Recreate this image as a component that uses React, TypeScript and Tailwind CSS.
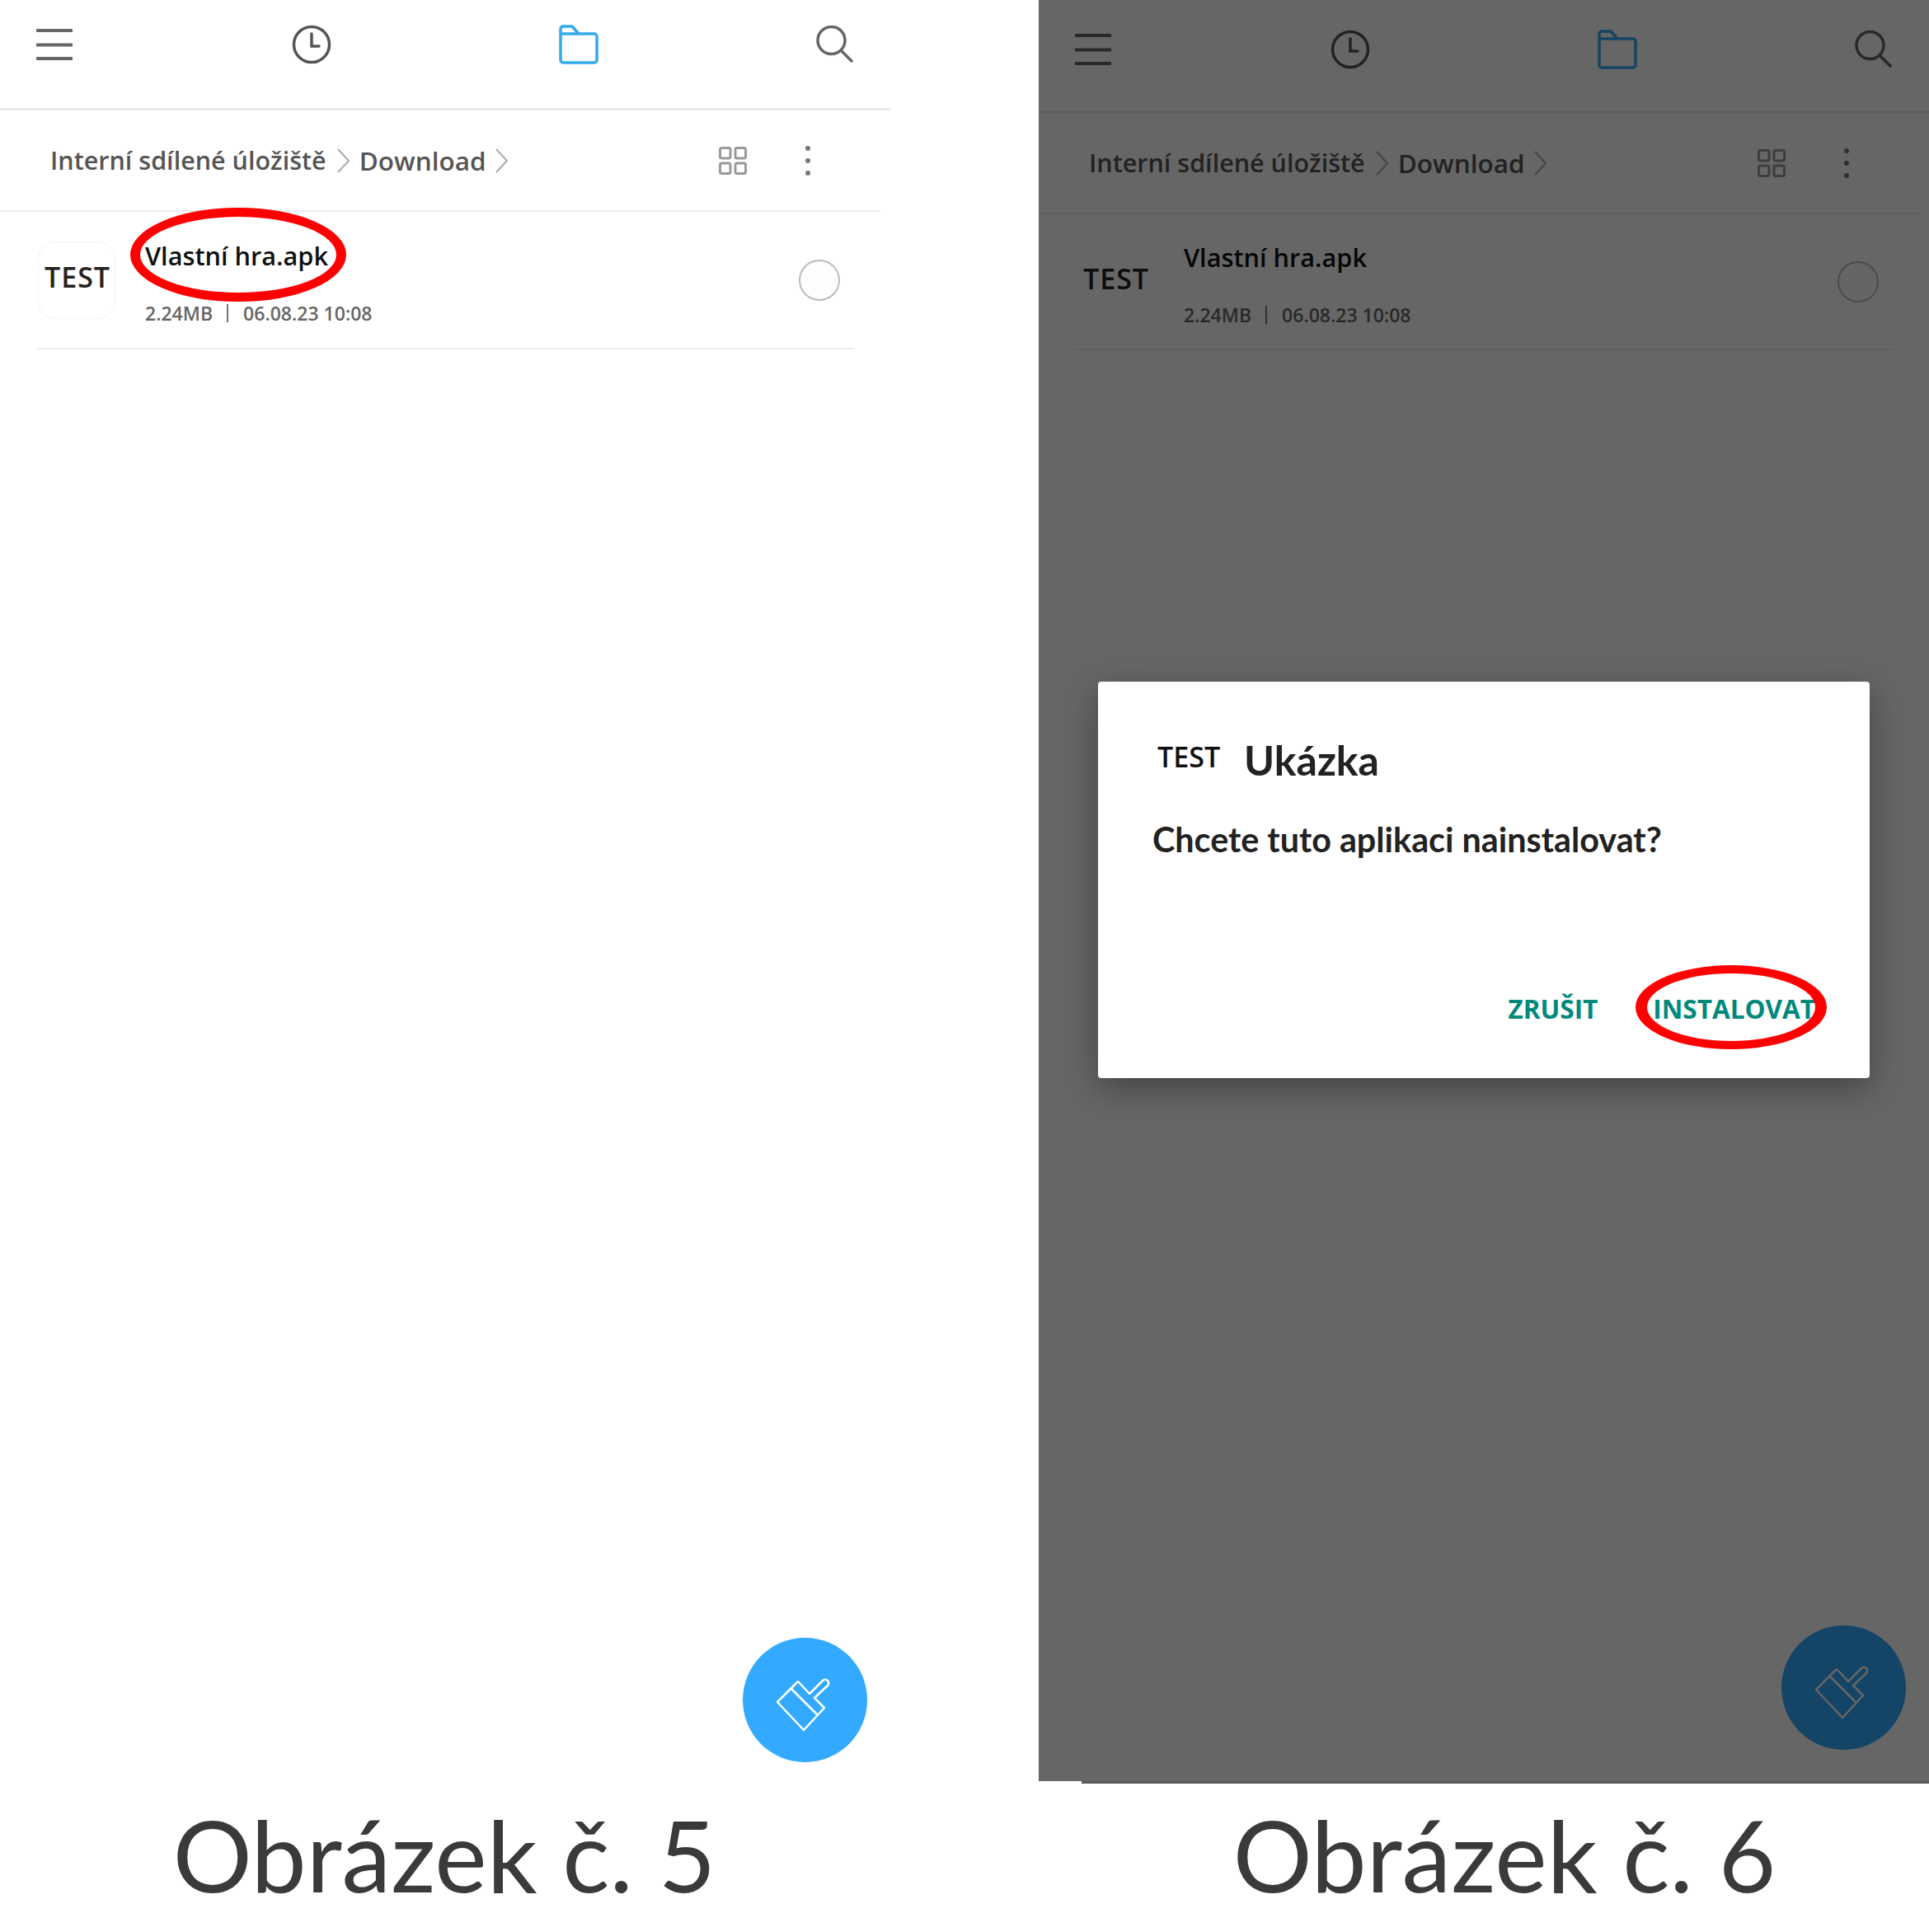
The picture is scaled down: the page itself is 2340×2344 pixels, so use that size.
const ink = "font-['Open_Sans','Noto_Sans',sans-serif]";

function Hamburger() {
  return (
    <svg width="44" height="40" viewBox="0 0 44 40" className="text-[#666]">
      <path d="M1 3h42M1 20.500h42M1 37h42" stroke="currentColor" strokeWidth="4" strokeLinecap="round" />
    </svg>
  );
}

function Clock() {
  return (
    <svg width="48" height="48" viewBox="0 0 48 48" fill="none" stroke="#555" strokeWidth="3.5">
      <circle cx="24" cy="24" r="21.500" />
      <path d="M24 11v15h9" strokeLinecap="round" />
    </svg>
  );
}

function FolderIcon() {
  return (
    <svg width="48" height="48" viewBox="0 0 48 48" fill="none" stroke="#33aaf0" strokeWidth="3.5" strokeLinejoin="round">
      <path d="M2 5a3 3 0 0 1 3-3h11l8 9h19a3 3 0 0 1 3 3v29a3 3 0 0 1-3 3H5a3 3 0 0 1-3-3z" />
      <path d="M2 11h22" />
    </svg>
  );
}

function SearchIcon() {
  return (
    <svg width="46" height="46" viewBox="0 0 46 46" fill="none" stroke="#666" strokeWidth="3.5" strokeLinecap="round">
      <circle cx="18.500" cy="18" r="16.500" />
      <path d="M30 30l13 13" />
    </svg>
  );
}

function Chevron() {
  return (
    <svg width="17" height="30" viewBox="0 0 17 30" fill="none" stroke="#aaa" strokeWidth="2">
      <path d="M2 1l13 14L2 29" />
    </svg>
  );
}

function GridIcon() {
  return (
    <svg width="34" height="34" viewBox="0 0 34 34" fill="none" stroke="#999" strokeWidth="3">
      <rect x="1.500" y="1.500" width="12.500" height="12.500" rx="2" />
      <rect x="20" y="1.500" width="12.500" height="12.500" rx="2" />
      <rect x="1.500" y="20" width="12.500" height="12.500" rx="2" />
      <rect x="20" y="20" width="12.500" height="12.500" rx="2" />
    </svg>
  );
}

function Dots() {
  return (
    <div className="flex h-[36px] w-[6px] flex-col items-center justify-between">
      <span className="size-[6px] rounded-full bg-[#777]" />
      <span className="size-[6px] rounded-full bg-[#777]" />
      <span className="size-[6px] rounded-full bg-[#777]" />
    </div>
  );
}

function Brush() {
  return (
    <svg width="120" height="120" viewBox="0 0 120 120" fill="none" stroke="currentColor" strokeWidth="2.500" strokeLinejoin="round">
      <path d="M26 62L50 38q1-1 2 0l13 14L81 36a4 4 0 0 1 6 6L71 57l12 12-25 27z" />
      <path d="M43 46l31 31" />
    </svg>
  );
}

function Ring({ className }: { className: string }) {
  return <div className={"absolute rounded-[50%] border-[#ff0000] " + className} />;
}

function Screen({ dim }: { dim?: boolean }) {
  return (
    <div className={`relative flex flex-col bg-white ${ink} ${dim ? "h-[2161px]" : "h-[2150px]"}`}>
      <header className={`flex w-[1080px] items-center pl-[44px] ${dim ? "h-[135px] pb-[15px]" : "h-[131px] pb-[23px]"}`}>
        <Hamburger />
        <span className="ml-[266px]"><Clock /></span>
        <span className="ml-[276px]"><FolderIcon /></span>
        <span className="ml-[264px]"><SearchIcon /></span>
      </header>
      <div className={`w-[1080px] bg-[#e9e9e9] ${dim ? "h-[2px]" : "h-[3px]"}`} />
      <div className="flex h-[121px] w-[1070px] items-center pl-[61px]">
        <span className="text-[30.500px] font-semibold text-[#555]">Interní sdílené úložiště</span>
        <span className="ml-[12px]"><Chevron /></span>
        <span className="ml-[11px] text-[31.500px] font-semibold text-[#555]">Download</span>
        <span className="ml-[10px]"><Chevron /></span>
        <span className="ml-auto"><GridIcon /></span>
        <span className="ml-[71px] mr-[87px]"><Dots /></span>
      </div>
      <div className="h-[2px] w-[1068px] bg-[#ececec]" />
      <div className={`flex w-[1036px] items-center pl-[46px] ${dim ? "h-[163px]" : "h-[165px]"}`}>
        <div className="flex h-[94px] w-[94px] items-center justify-center rounded-[22px] border border-[#f2f2f2] pb-[6px] pl-[2px]">
          <span className="text-[34px] font-semibold tracking-[1px] text-[#222]">TEST</span>
        </div>
        <div className="ml-[36px] flex flex-1 flex-col gap-[33px] pt-[4px]">
          <span className="text-[30.700px] leading-[44px] font-semibold text-[#111]">Vlastní hra.apk</span>
          <div className="flex items-center text-[23px] leading-[30px] font-semibold text-[#666]">
            <span>2.24MB</span>
            <span className="ml-[17px] mr-[18px] h-[22px] w-[2px] bg-[#777]" />
            <span>06.08.23 10:08</span>
          </div>
        </div>
        <div className="mr-[17px] size-[50px] rounded-full border-2 border-[#bbb] bg-[#fdfdfd]" />
      </div>
      <div className="ml-[44px] h-[2px] w-[992px] bg-[#eee]" />
      {!dim && <Ring className="left-[158px] top-[252px] h-[114px] w-[262px] border-x-[12px] border-y-[11px]" />}
      <div className={`absolute flex size-[151px] items-center justify-center rounded-full bg-[#33aaff] text-white ${dim ? "left-[901px] top-[1972px]" : "left-[901px] top-[1987px]"}`}>
        <Brush />
      </div>
      {dim && (
        <>
          <div className="absolute inset-0 bg-black/60" />
          <div className="absolute left-[72px] top-[827px] flex h-[481px] w-[936px] flex-col rounded-[4px] bg-white pl-[66px] pr-[66px] shadow-[0_12px_40px_rgba(0,0,0,0.35)]">
            <div className="mt-[59px] flex items-center">
              <span className="ml-[6px] mt-[-8px] text-[34px] font-semibold text-[#111]">TEST</span>
              <span className="ml-[29px] font-['Lato',sans-serif] text-[50px] leading-[72px] font-bold text-[#222]">Ukázka</span>
            </div>
            <p className="mt-[34px] font-['Lato',sans-serif] text-[41.300px] leading-[52px] font-bold text-[#222]">Chcete tuto aplikaci nainstalovat?</p>
            <div className="mt-auto mb-[61px] flex justify-end gap-[67px] text-[31.500px] leading-[46px] font-bold text-[#00897b]">
              <span>ZRUŠIT</span>
              <span>INSTALOVAT</span>
            </div>
            <Ring className="left-[652px] top-[344px] h-[102px] w-[232px] border-x-[14px] border-y-[10px]" />
          </div>
        </>
      )}
    </div>
  );
}

function Panel({ n, dim, className }: { n: number; dim?: boolean; className: string }) {
  return (
    <section className={className}>
      <Screen dim={dim} />
      {dim && <div className="ml-[52px] h-[3px] bg-[#5a5a5a]" />}
      <h2 className={`font-['Lato',sans-serif] text-center text-[120px] leading-[150px] text-[#3a3a3a] ${dim ? "mt-[11px] pl-[50px]" : "mt-[25px] w-[1078px]"}`}>
        Obrázek č. {n}
      </h2>
    </section>
  );
}

export default function App() {
  return (
    <div className="flex h-[2344px] w-[2340px] overflow-hidden bg-white">
      <Panel n={5} className="w-[1260px]" />
      <Panel n={6} dim className="w-[1080px]" />
    </div>
  );
}
